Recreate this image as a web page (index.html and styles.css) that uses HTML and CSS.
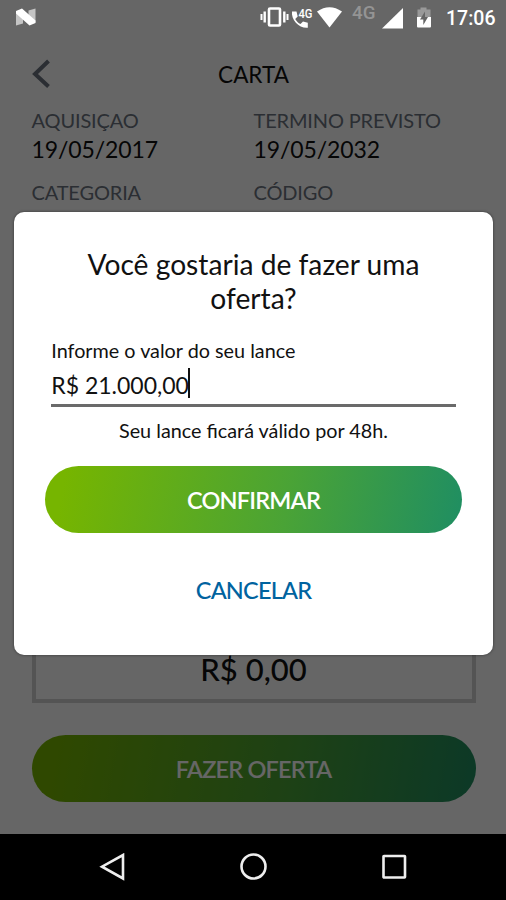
FILE: index.html
```html
<!DOCTYPE html>
<html lang="pt-BR">
<head>
  <meta charset="UTF-8">
  <meta name="viewport" content="width=device-width, initial-scale=1.0">
  <title>Carta</title>
  <link rel="stylesheet" href="styles.css">
</head>
<body>
  <div class="phone">
    <div class="status-bar">
      <svg class="logo-n" width="22" height="18" viewBox="0 0 22 18">
        <path d="M1 3l7 5v7.500l-7 2zM20.500 .500v14l-7-4V2.500z" fill="#c4c4c4"/>
        <path d="M1 3l6-2.500 13.500 12v2.500l-6 2.500L1 5.500z" fill="#fff"/>
      </svg>
      <svg class="status-icons" width="174" height="36" viewBox="0 0 174 36">
        <g fill="none" stroke="#fff">
          <rect x="9" y="8.500" width="11" height="17" rx="1" stroke-width="2.600"/>
          <path d="M4.700 11.500v11M24.300 11.500v11" stroke-width="2.400"/>
          <path d="M1.500 14v6M27.500 14v6" stroke-width="2"/>
        </g>
        <path d="M32 11.500h4.500l1.200 5-2.500 2.400c1.300 2.300 3 4 5.300 5.200l2.500-2.500 4.800 1.200v5C39 28.500 31 20 32 11.500z" fill="#fff"/>
        <text x="38.500" y="17.500" class="mini-net" textLength="14" lengthAdjust="spacingAndGlyphs">4G</text>
        <path d="M57 11.500q12.500-8.500 25 0L69.500 27.500z" fill="#fff"/>
        <text x="92" y="18.700" class="net" textLength="23.500" lengthAdjust="spacingAndGlyphs">4G</text>
        <path d="M143 8v20.500h-21z" fill="#fff"/>
        <path d="M157.500 9.500h3v-2h6v2h4v8h-13z" fill="#999"/>
        <path d="M157 17h14v9.500q0 1-1 1h-12q-1 0-1-1z" fill="#fff"/>
        <path d="M165 11.500l-5 8h3.300v5.500l4.700-8h-3z" fill="#666"/>
      </svg>
      <span class="clock">17:06</span>
    </div>

    <div class="page">
      <div class="header">
        <svg class="back" width="20" height="32" viewBox="0 0 20 32">
          <path d="M16.500 3L3 16l13.500 12.500" fill="none" stroke="#6b7480" stroke-width="4"/>
        </svg>
        <h1>CARTA</h1>
      </div>
      <div class="details">
        <div class="detail">
          <span class="label">AQUISIÇAO</span>
          <span class="value">19/05/2017</span>
        </div>
        <div class="detail">
          <span class="label">TERMINO PREVISTO</span>
          <span class="value">19/05/2032</span>
        </div>
        <div class="detail">
          <span class="label">CATEGORIA</span>
        </div>
        <div class="detail">
          <span class="label">CÓDIGO</span>
        </div>
      </div>
      <div class="offer-box">R$ 0,00</div>
      <button type="button" class="btn offer-btn">FAZER OFERTA</button>
    </div>

    <div class="overlay">
      <form class="modal">
        <h2>Você gostaria de fazer uma oferta?</h2>
        <div class="form-group">
          <div class="field-label">Informe o valor do seu lance</div>
          <div class="field"><span class="amount">R$ 21.000,00</span><span class="caret"></span></div>
        </div>
        <p class="message">Seu lance ficará válido por 48h.</p>
        <button type="button" class="btn">CONFIRMAR</button>
        <a href="#" class="cancel">CANCELAR</a>
      </form>
    </div>

    <div class="nav-bar">
      <svg width="28" height="28" viewBox="0 0 28 28"><path d="M25 2v23.500L4 13.700z"/></svg>
      <svg width="28" height="28" viewBox="0 0 28 28"><circle cx="14.500" cy="13.500" r="12"/></svg>
      <svg width="28" height="28" viewBox="0 0 28 28"><rect x="3.500" y="3" width="21.500" height="21.500" rx=".5"/></svg>
    </div>
  </div>
</body>
</html>
```

FILE: styles.css
```css
* {
  box-sizing: border-box;
}

body {
  margin: 0;
  font-family: Lato, sans-serif;
  color: #111;
}

h1, h2, p {
  margin: 0;
  font-weight: 400;
}

.phone {
  position: relative;
  display: flex;
  flex-direction: column;
  width: 506px;
  height: 900px;
  overflow: hidden;
  background: #fff;
}

/* Status bar, drawn over the dimmed page */
.status-bar {
  position: relative;
  z-index: 2;
  display: flex;
  align-items: center;
  height: 36px;
  padding-left: 15px;
}

.logo-n {
  margin-top: -2px;
}

.status-icons {
  margin-left: 223px;
}

.status-icons text {
  font-family: Roboto, sans-serif;
}

.mini-net {
  font-size: 12.5px;
  font-weight: 500;
  fill: #fff;
}

.net {
  font-size: 18px;
  font-weight: 500;
  fill: #949494;
}

.clock {
  margin-left: 12px;
  font-family: Roboto, sans-serif;
  font-size: 19.5px;
  font-weight: 500;
  color: #fff;
}

/* Page */
.page {
  display: flex;
  flex-direction: column;
  height: 798px;
  padding: 0 30.5px 32px 31.5px;
}

.header {
  display: grid;
  grid-template-columns: 20px 1fr 20px;
  align-items: center;
  height: 76px;
}

.header h1 {
  text-align: center;
  font-size: 22.5px;
}

.details {
  display: grid;
  grid-template-columns: 222px 1fr;
  row-gap: 13px;
  margin-top: -6px;
}

.detail {
  display: flex;
  flex-direction: column;
}

.label {
  font-size: 20px;
  line-height: 28px;
  letter-spacing: -.15px;
  color: #6b7480;
}

.value {
  font-size: 23px;
  line-height: 31px;
  letter-spacing: -.1px;
}

.offer-box {
  margin-top: auto;
  padding-bottom: 13px;
  border: 4px solid #d2d2d2;
  text-align: center;
  font-size: 31px;
  font-weight: 500;
  line-height: 34px;
}

.btn {
  height: 67px;
  border: none;
  border-radius: 34px;
  background: linear-gradient(100deg, #76b500 5%, #4aa336 58%, #1f8e62);
  color: #fff;
  font-family: inherit;
  font-size: 23.5px;
  font-weight: 600;
  letter-spacing: -.8px;
}

.offer-btn {
  margin-top: 32px;
}

/* Modal */
.overlay {
  position: absolute;
  inset: 0 0 66px;
  display: flex;
  justify-content: center;
  align-items: flex-start;
  padding-top: 211.5px;
  padding-left: 1px;
  background: rgba(0, 0, 0, .6);
}

.modal {
  display: flex;
  flex-direction: column;
  width: 478.5px;
  height: 443px;
  padding: 35px 31px 0;
  border-radius: 10px;
  background: #fff;
  box-shadow: 0 0 3px rgba(0, 0, 0, .5);
}

.modal h2 {
  padding: 0 30px;
  text-align: center;
  font-size: 28.2px;
  line-height: 34px;
}

.form-group {
  margin: 23px 6px 0;
}

.field-label {
  font-size: 19.8px;
  line-height: 24px;
}

.field {
  display: flex;
  align-items: center;
  height: 45.5px;
  padding-top: 5px;
  border-bottom: 3px solid #6a6a6a;
  font-size: 23px;
}

.caret {
  width: 2px;
  height: 30px;
  margin: -4px 0 0 -1px;
  background: #111;
}

.message {
  margin-top: 11px;
  text-align: center;
  font-size: 19.8px;
  line-height: 24px;
}

.modal .btn {
  margin-top: 24px;
}

.cancel {
  margin-top: 43px;
  text-align: center;
  text-decoration: none;
  font-size: 23.5px;
  font-weight: 500;
  line-height: 28px;
  letter-spacing: -.8px;
  color: #00639f;
}

/* Android navigation */
.nav-bar {
  display: flex;
  justify-content: center;
  align-items: center;
  gap: 113px;
  height: 66px;
  background: #000;
}

.nav-bar svg {
  fill: none;
  stroke: #eee;
  stroke-width: 2.6;
}
```
